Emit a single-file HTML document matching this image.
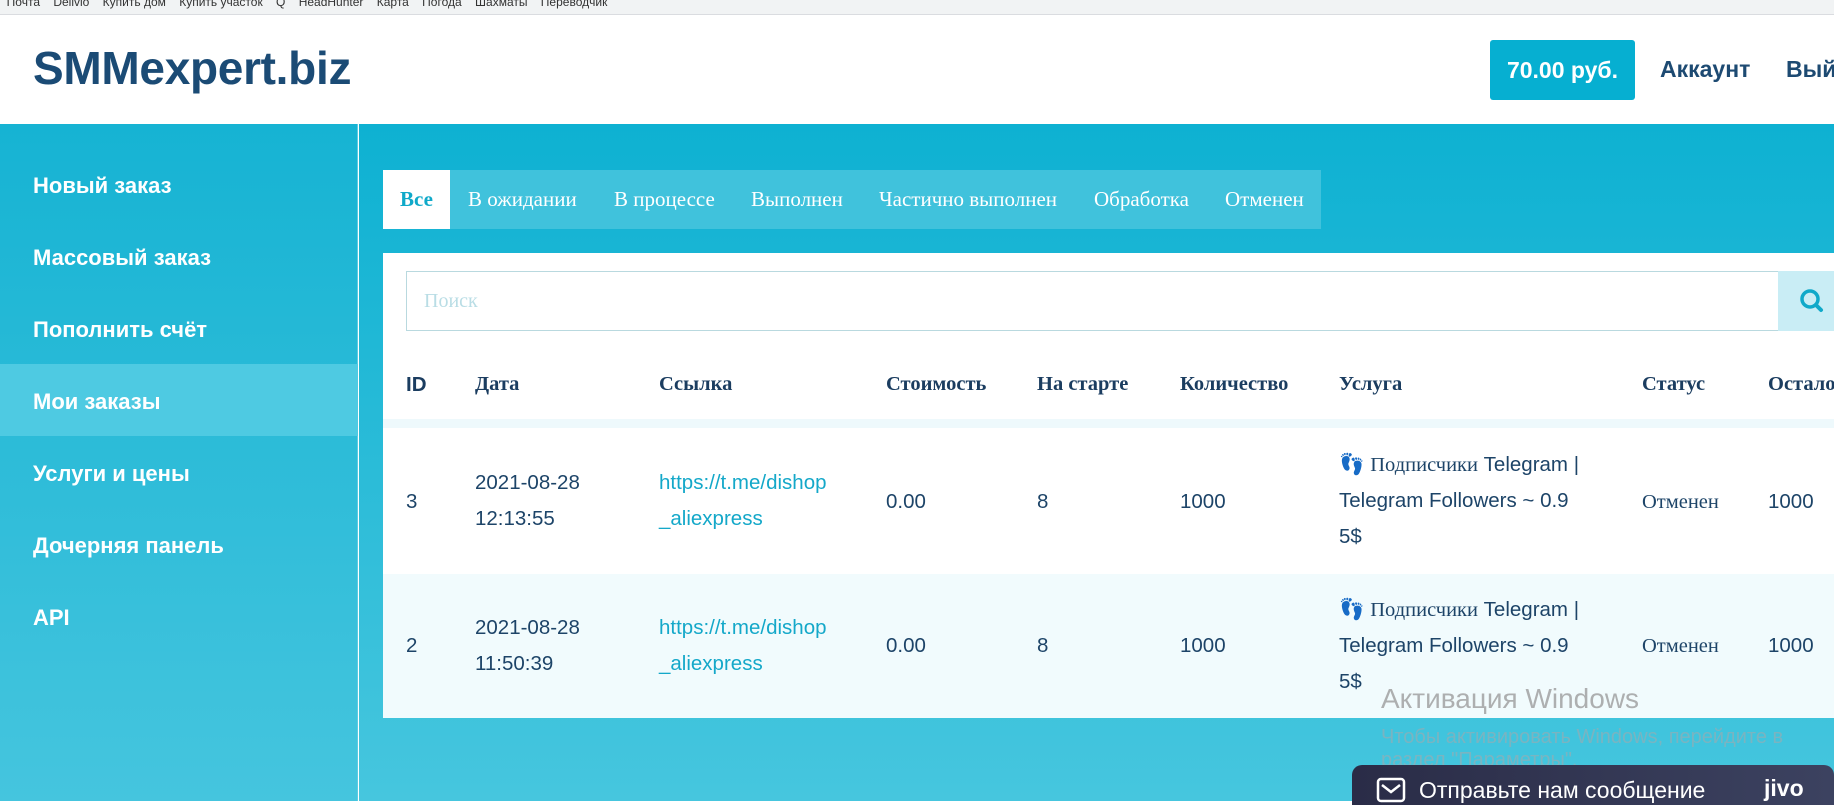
<!DOCTYPE html>
<html><head><meta charset="utf-8"><style>
*{margin:0;padding:0;box-sizing:border-box}
body{width:1834px;height:801px;overflow:hidden;position:relative;background:#fff;font-family:"Liberation Sans",sans-serif}
.bm{position:absolute;left:0;top:0;width:1834px;height:15px;background:#f1f3f4;border-bottom:1px solid #dadce0;font-size:12px;color:#333;line-height:4px;white-space:nowrap;overflow:hidden}
.logo{position:absolute;left:33px;top:41px;font-size:46px;font-weight:bold;color:#1b4b75;letter-spacing:-0.3px}
.bal{position:absolute;left:1490px;top:40px;width:145px;height:60px;background:#06afd1;border-radius:3px;color:#fff;font-size:23px;font-weight:bold;text-align:center;line-height:60px}
.nav{position:absolute;top:56px;font-size:23px;font-weight:bold;color:#1d4a72}
.side{position:absolute;left:0;top:124px;width:358px;height:677px;background:linear-gradient(#16b3d3,#45c5de);border-right:1px solid #5bcde3}
.main{position:absolute;left:359px;top:124px;width:1475px;height:677px;background:linear-gradient(#0eb1d2,#46c6de)}
.si{position:absolute;left:33px;font-size:22px;font-weight:bold;color:#fff}
.act{position:absolute;left:0;top:240px;width:358px;height:72px;background:#4ecae2}
.tabs{position:absolute;left:383px;top:170px;width:938px;height:59px;background:#40c2dc;font-family:"Liberation Serif",serif;font-size:21px;color:#fff}
.tabs span{position:absolute;top:17px}
.card{position:absolute;left:383px;top:253px;width:1451px;height:465px;background:#fff}
.srch{position:absolute;left:23px;top:18px;width:1373px;height:60px;border:1px solid #b9d9df;font-family:"Liberation Serif",serif;font-size:20px;color:#b9dde5;padding:18px 17px}
.sbtn{position:absolute;left:1395px;top:18px;width:60px;height:60px;background:#c9edf5}
.th{position:absolute;top:120px;font-family:"Liberation Serif",serif;font-weight:bold;font-size:20.5px;color:#1b3d60}
.r1{position:absolute;left:0;top:166px;width:1451px;height:9px;background:#eef9fc}
.r2{position:absolute;left:0;top:321px;width:1451px;height:144px;background:#f1fbfd}
.td{position:absolute;font-size:20.5px;color:#1d4468;line-height:36px}
.lk{color:#14a8c9}
.sv{font-family:"Liberation Serif",serif}
.st{font-family:"Liberation Serif",serif}
.win{position:absolute;left:1381px;color:rgba(150,150,150,.75)}
.jivo{position:absolute;left:1352px;top:765px;width:482px;height:40px;background:linear-gradient(90deg,#2a2c47,#3c4260);border-radius:10px 10px 0 0;color:#fff;font-size:23px}
</style></head><body>
<div class="bm">&nbsp; Почта &nbsp;&nbsp; Delivio &nbsp;&nbsp; Купить дом &nbsp;&nbsp; Купить участок &nbsp;&nbsp; Q &nbsp;&nbsp; HeadHunter &nbsp;&nbsp; Карта &nbsp;&nbsp; Погода &nbsp;&nbsp; Шахматы &nbsp;&nbsp; Переводчик</div>
<div class="logo">SMMexpert.biz</div>
<div class="bal">70.00 руб.</div>
<div class="nav" style="left:1660px">Аккаунт</div>
<div class="nav" style="left:1786px">Выйти</div>
<div class="side">
<div class="act"></div>
<div class="si" style="top:49px">Новый заказ</div>
<div class="si" style="top:121px">Массовый заказ</div>
<div class="si" style="top:193px">Пополнить счёт</div>
<div class="si" style="top:265px">Мои заказы</div>
<div class="si" style="top:337px">Услуги и цены</div>
<div class="si" style="top:409px">Дочерняя панель</div>
<div class="si" style="top:481px">API</div>
</div>
<div class="main"></div>
<div class="tabs">
<div style="position:absolute;left:0;top:0;width:67px;height:59px;background:#fff"></div>
<span style="left:17px;color:#0fa9c9;font-weight:bold">Все</span>
<span style="left:85px">В ожидании</span>
<span style="left:231px">В процессе</span>
<span style="left:368px">Выполнен</span>
<span style="left:496px">Частично выполнен</span>
<span style="left:711px">Обработка</span>
<span style="left:842px">Отменен</span>
</div>
<div class="card">
<div class="srch">Поиск</div>
<div class="sbtn"><svg width="60" height="60"><circle cx="32" cy="28" r="8" fill="none" stroke="#10a9c9" stroke-width="3.5"/><line x1="38" y1="34" x2="43" y2="39" stroke="#10a9c9" stroke-width="4" stroke-linecap="round"/></svg></div>
<div class="th" style="left:23px;font-family:'Liberation Sans',sans-serif">ID</div>
<div class="th" style="left:92px">Дата</div>
<div class="th" style="left:276px">Ссылка</div>
<div class="th" style="left:503px">Стоимость</div>
<div class="th" style="left:654px">На старте</div>
<div class="th" style="left:797px">Количество</div>
<div class="th" style="left:956px">Услуга</div>
<div class="th" style="left:1259px">Статус</div>
<div class="th" style="left:1385px">Осталось</div>
<div class="r1"></div>
<div class="r2"></div>
<div class="td" style="left:23px;top:231px">3</div>
<div class="td" style="left:92px;top:212px">2021-08-28<br>12:13:55</div>
<div class="td lk" style="left:276px;top:212px">https://t.me/dishop<br>_aliexpress</div>
<div class="td" style="left:503px;top:231px">0.00</div>
<div class="td" style="left:654px;top:231px">8</div>
<div class="td" style="left:797px;top:231px">1000</div>
<div class="td" style="left:956px;top:194px"><span style="color:#e0401f">👣</span> <span class="sv">Подписчики</span> Telegram |<br>Telegram Followers ~ 0.9<br>5$</div>
<div class="td st" style="left:1259px;top:231px">Отменен</div>
<div class="td" style="left:1385px;top:231px">1000</div>
<div class="td" style="left:23px;top:375px">2</div>
<div class="td" style="left:92px;top:357px">2021-08-28<br>11:50:39</div>
<div class="td lk" style="left:276px;top:357px">https://t.me/dishop<br>_aliexpress</div>
<div class="td" style="left:503px;top:375px">0.00</div>
<div class="td" style="left:654px;top:375px">8</div>
<div class="td" style="left:797px;top:375px">1000</div>
<div class="td" style="left:956px;top:339px"><span style="color:#e0401f">👣</span> <span class="sv">Подписчики</span> Telegram |<br>Telegram Followers ~ 0.9<br>5$</div>
<div class="td st" style="left:1259px;top:375px">Отменен</div>
<div class="td" style="left:1385px;top:375px">1000</div>
</div>
<div class="win" style="top:683px;font-size:28px">Активация Windows</div>
<div class="win" style="top:726px;font-size:20px;color:rgba(160,170,175,.6)">Чтобы активировать Windows, перейдите в<br>раздел "Параметры".</div>
<div class="jivo"><svg style="position:absolute;left:24px;top:12px" width="30" height="26"><rect x="2" y="2" width="26" height="22" rx="3" fill="none" stroke="#fff" stroke-width="2.5"/><path d="M6 8 L15 15 L24 8" fill="none" stroke="#fff" stroke-width="2.5"/></svg><span style="position:absolute;left:67px;top:12px">Отправьте нам сообщение</span><span style="position:absolute;left:412px;top:10px;font-weight:bold">jivo</span></div>
</body></html>
